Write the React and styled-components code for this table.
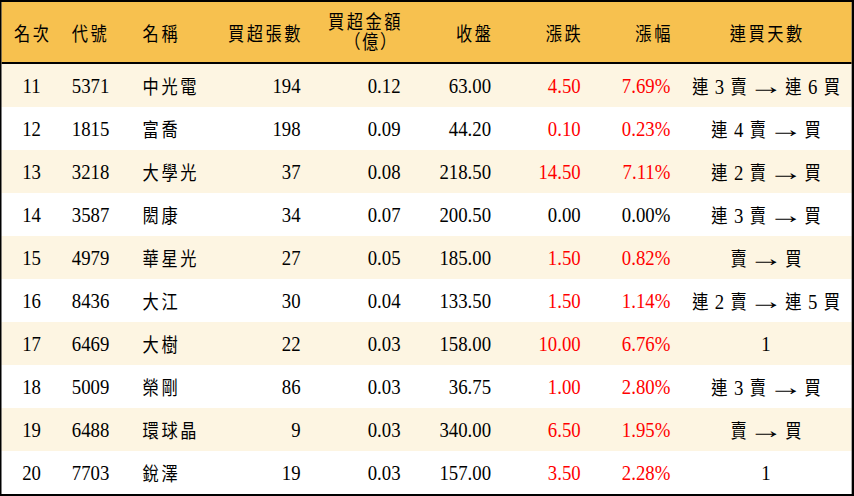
import React from "react";
import styled, { createGlobalStyle } from "styled-components";

const Global = createGlobalStyle`
  html, body { margin: 0; padding: 0; background: #fff; overflow: hidden; }
  #root { width: 854px; height: 496px; }
`;

const COLS = "70px 82px 94px 117px 117px 105px 105px 105px 1fr";

const Frame = styled.div`
  width: 1000px;
  height: 496px;
  box-sizing: border-box;
  border-style: solid;
  border-color: #000;
  border-width: 2px 3.5px 2px 2.4px;
  transform: scaleX(0.854);
  transform-origin: 0 0;
  font-family: "Liberation Serif", "Noto Sans CJK TC", serif;
  font-size: 22px;
  color: #000;
  display: flex;
  flex-direction: column;
`;

const HeaderRow = styled.div`
  display: grid;
  grid-template-columns: ${COLS};
  height: 60px;
  flex: none;
  background: #f7c14f;
  border-bottom: 2px solid #000;
`;

const Row = styled.div`
  display: grid;
  grid-template-columns: ${COLS};
  height: 43px;
  flex: none;
  background: ${(p) => (p.$alt ? "#fdf5e2" : "#ffffff")};
`;

const Cell = styled.div`
  display: flex;
  align-items: center;
  justify-content: ${(p) =>
    p.$align === "right" ? "flex-end" : p.$align === "center" ? "center" : "flex-start"};
  padding: ${(p) =>
    p.$align === "right" ? `0 ${p.$pad}px 0 0` : p.$align === "left" ? `0 0 0 ${p.$pad}px` : "0"};
  color: ${(p) => (p.$red ? "#ff0000" : "#000")};
  white-space: pre;
  line-height: 1;
`;

const HeadCell = styled(Cell)`
  font-family: "Noto Sans CJK TC", sans-serif;
  font-size: 19px;
  letter-spacing: 3px;
  margin-right: ${(p) => (p.$align === "right" ? "-3px" : "0")};
  padding-left: ${(p) => (p.$align === "center" ? "3px" : undefined)};
`;

const TwoLine = styled.div`
  display: flex;
  flex-direction: column;
  align-items: flex-end;
  line-height: 20px;
  margin-top: -2px;
`;

const Sub = styled.span`
  letter-spacing: 2px;
  padding-right: 6px;
`;

const Days = styled.span`
  white-space: pre;
  word-spacing: 2px;
`;

const Han = styled.span`
  font-family: "Noto Sans CJK TC", sans-serif;
  font-size: 19px;
  letter-spacing: ${(p) => p.$ls || 0}px;
`;

const Arrow = styled.span`
  display: inline-block;
  font-family: "Liberation Serif", serif;
  font-size: 24px;
  transform: scaleX(1.7);
  margin: 0 3px;
`;

const columns = [
  { key: "rank", title: "名次", align: "center", pad: 0 },
  { key: "code", title: "代號", align: "left", pad: 12 },
  { key: "name", title: "名稱", align: "left", pad: 13 },
  { key: "vol", title: "買超張數", align: "right", pad: 13 },
  { key: "amt", title: "買超金額", sub: "（億）", align: "right", pad: 13 },
  { key: "close", title: "收盤", align: "right", pad: 12 },
  { key: "chg", title: "漲跌", align: "right", pad: 12, color: true },
  { key: "pct", title: "漲幅", align: "right", pad: 12, color: true },
  { key: "days", title: "連買天數", align: "center", pad: 0 },
];

const rows = [
  { rank: "11", code: "5371", name: "中光電", vol: "194", amt: "0.12", close: "63.00", chg: "4.50", pct: "7.69%", days: "連 3 賣 → 連 6 買" },
  { rank: "12", code: "1815", name: "富喬", vol: "198", amt: "0.09", close: "44.20", chg: "0.10", pct: "0.23%", days: "連 4 賣 → 買" },
  { rank: "13", code: "3218", name: "大學光", vol: "37", amt: "0.08", close: "218.50", chg: "14.50", pct: "7.11%", days: "連 2 賣 → 買" },
  { rank: "14", code: "3587", name: "閎康", vol: "34", amt: "0.07", close: "200.50", chg: "0.00", pct: "0.00%", days: "連 3 賣 → 買" },
  { rank: "15", code: "4979", name: "華星光", vol: "27", amt: "0.05", close: "185.00", chg: "1.50", pct: "0.82%", days: "賣 → 買" },
  { rank: "16", code: "8436", name: "大江", vol: "30", amt: "0.04", close: "133.50", chg: "1.50", pct: "1.14%", days: "連 2 賣 → 連 5 買" },
  { rank: "17", code: "6469", name: "大樹", vol: "22", amt: "0.03", close: "158.00", chg: "10.00", pct: "6.76%", days: "1" },
  { rank: "18", code: "5009", name: "榮剛", vol: "86", amt: "0.03", close: "36.75", chg: "1.00", pct: "2.80%", days: "連 3 賣 → 買" },
  { rank: "19", code: "6488", name: "環球晶", vol: "9", amt: "0.03", close: "340.00", chg: "6.50", pct: "1.95%", days: "賣 → 買" },
  { rank: "20", code: "7703", name: "銳澤", vol: "19", amt: "0.03", close: "157.00", chg: "3.50", pct: "2.28%", days: "1" },
];

function DaysText({ text }) {
  const parts = text.split(" ");
  return (
    <Days>
      {parts.map((p, i) => (
        <React.Fragment key={i}>
          {i > 0 ? " " : null}
          {/[\u4e00-\u9fff]/.test(p) ? <Han>{p}</Han> : p === "→" ? <Arrow>→</Arrow> : p}
        </React.Fragment>
      ))}
    </Days>
  );
}

function renderValue(key, value) {
  if (key === "name") return <Han $ls={3}>{value}</Han>;
  if (key === "days") return <DaysText text={value} />;
  return value;
}

export default function App() {
  return (
    <>
      <Global />
      <Frame>
        <HeaderRow>
          {columns.map((c) => (
            <HeadCell key={c.key} $align={c.align} $pad={c.pad}>
              {c.sub ? (
                <TwoLine>
                  <span>{c.title}</span>
                  <Sub>{c.sub}</Sub>
                </TwoLine>
              ) : (
                c.title
              )}
            </HeadCell>
          ))}
        </HeaderRow>
        {rows.map((r, i) => (
          <Row key={r.rank} $alt={i % 2 === 0}>
            {columns.map((c) => (
              <Cell
                key={c.key}
                $align={c.align}
                $pad={c.pad}
                $red={c.color && parseFloat(r.chg) > 0}
              >
                {renderValue(c.key, r[c.key])}
              </Cell>
            ))}
          </Row>
        ))}
      </Frame>
    </>
  );
}
